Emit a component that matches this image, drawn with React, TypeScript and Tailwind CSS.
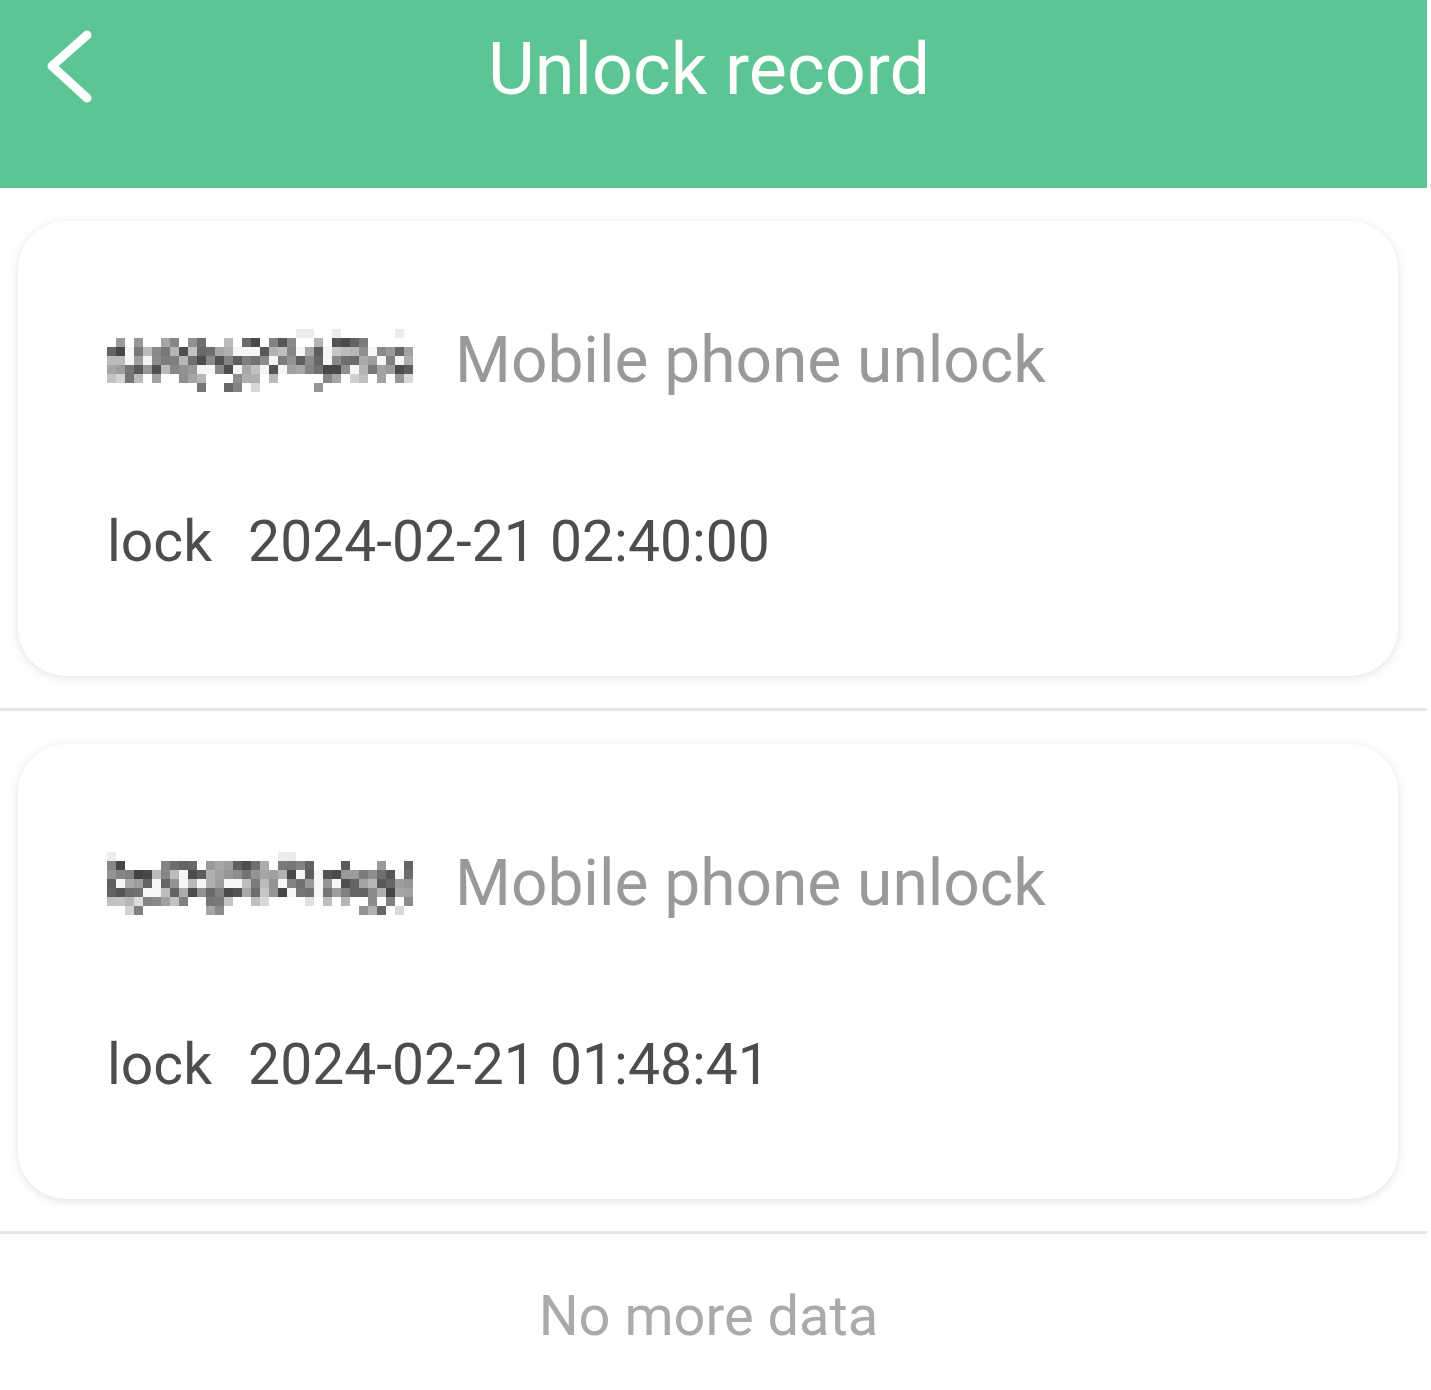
import React from 'react';

type Record = {
  seed: number;
  method: string;
  action: string;
  time: string;
};

const records: Record[] = [
  { seed: 7, method: 'Mobile phone unlock', action: 'lock', time: '2024-02-21 02:40:00' },
  { seed: 23, method: 'Mobile phone unlock', action: 'lock', time: '2024-02-21 01:48:41' },
];

// pixelated (mosaic) user name, drawn as grey squares
const Mosaic: React.FC<{ seed: number }> = ({ seed }) => {
  const cols = 34;
  const rows = 7;
  const cells: React.ReactNode[] = [];
  let s = seed * 9301 + 49297;
  const rand = () => {
    s = (s * 9301 + 49297) % 233280;
    return s / 233280;
  };
  for (let r = 0; r < rows; r++) {
    for (let c = 0; c < cols; c++) {
      const v = rand();
      let ink = 0;
      if (r === 0) ink = v > 0.88 ? 0.1 : 0;
      else if (r === 6) ink = v > 0.8 ? 0.2 + rand() * 0.6 : 0;
      else if (r === 5) ink = v > 0.4 ? 0.15 + rand() * 0.6 : 0;
      else if (r === 1) ink = v > 0.4 ? 0.3 + rand() * 0.7 : 0;
      else ink = v > 0.15 ? 0.3 + rand() * 0.7 : 0.05;
      if (ink <= 0) continue;
      const g = Math.round(255 - ink * 190);
      cells.push(
        <rect key={`${r}-${c}`} x={c * 9} y={r * 9} width={9} height={9} fill={`rgb(${g},${g},${g})`} />
      );
    }
  }
  return (
    <svg width={306} height={63} viewBox="0 0 306 63" className="shrink-0">
      {cells}
    </svg>
  );
};

const RecordCard: React.FC<{ record: Record }> = ({ record }) => (
  <div className="pt-[33px] pb-[32px] border-b-[3px] border-[#e6e6e6]">
    <div className="ml-[18px] mr-[29px] h-[455px] rounded-[48px] bg-white shadow-[0_2px_10px_rgba(0,0,0,0.12)] pl-[89px] flex flex-col">
      <div className="flex items-center mt-[108px] h-[63px]">
        <Mosaic seed={record.seed} />
        <span className="ml-[42px] text-[64px] leading-none text-[#999999]">{record.method}</span>
      </div>
      <div className="flex items-center mt-[118px] h-[63px] text-[#4d4d4d] text-[57px] leading-none">
        <span>{record.action}</span>
        <span className="ml-[36px]">{record.time}</span>
      </div>
    </div>
  </div>
);

const App: React.FC = () => {
  return (
    <div className="w-[1427px] bg-white min-h-[1390px]" style={{ fontFamily: 'Roboto, "Noto Sans", sans-serif' }}>
      <header className="relative h-[188px] bg-[#5cc593] flex items-start justify-center pr-[9px]">
        <button className="absolute left-[36px] top-[21px] p-1">
          <svg width={56} height={80} viewBox="0 0 56 80" fill="none">
            <path d="M47 10 L12 41 L47 73" stroke="white" strokeWidth={9} strokeLinecap="round" strokeLinejoin="round" />
          </svg>
        </button>
        <h1 className="mt-[28px] text-[72px] leading-[84px] text-white font-normal">Unlock record</h1>
      </header>
      <div>
        {records.map((r, i) => (
          <RecordCard key={i} record={r} />
        ))}
      </div>
      <div className="text-center pt-[54px] pr-[10px] text-[56px] leading-none text-[#aaaaaa]">No more data</div>
    </div>
  );
};

export default App;
